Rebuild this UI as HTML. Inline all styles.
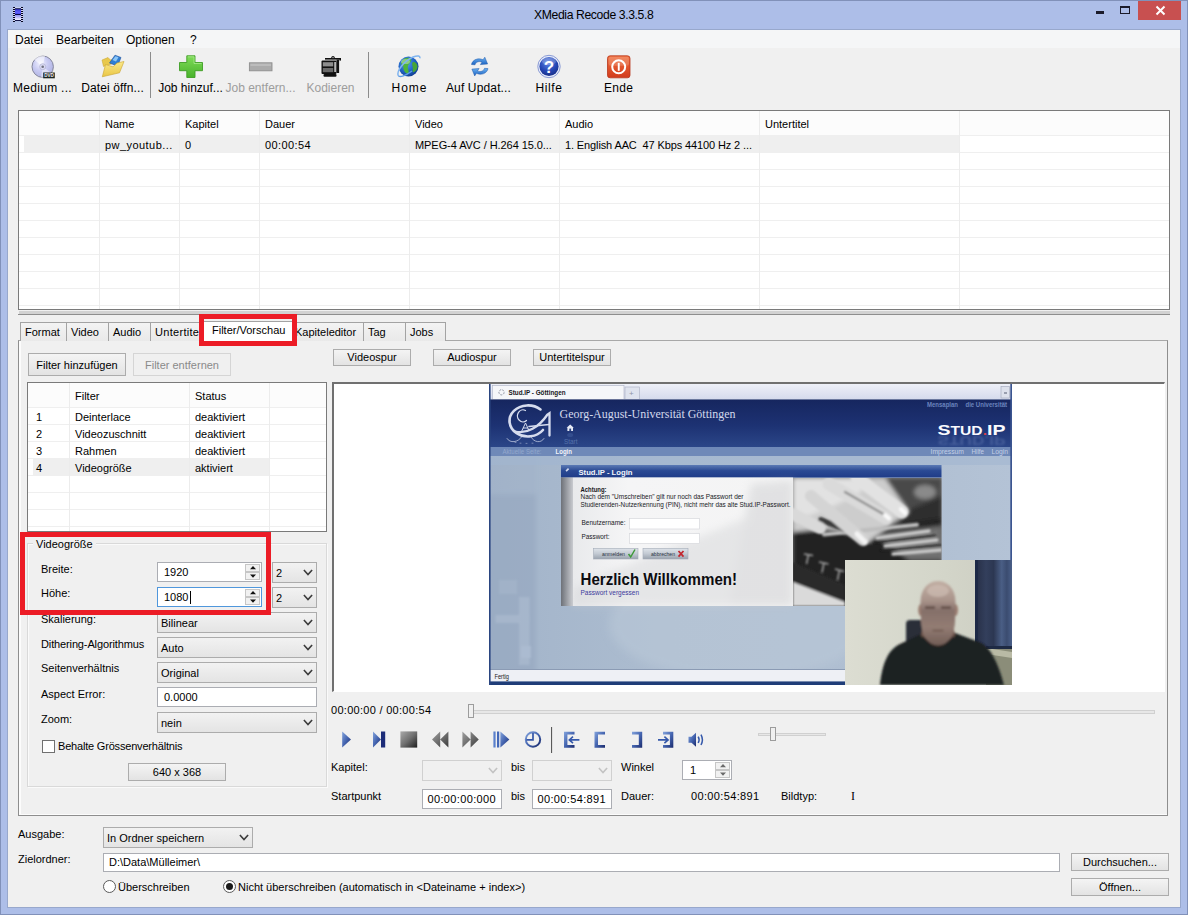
<!DOCTYPE html>
<html lang="de">
<head>
<meta charset="utf-8">
<title>XMedia Recode 3.3.5.8</title>
<style>
*{box-sizing:border-box;margin:0;padding:0}
html,body{width:1188px;height:915px;overflow:hidden}
body{background:#adbee8;font-family:"Liberation Sans",sans-serif;font-size:11px;color:#000;position:relative}
.a{position:absolute}
.t{position:absolute;white-space:pre;line-height:13px;height:13px;font-size:11px}
.tb{position:absolute;white-space:pre;font-size:12px;line-height:14px;height:14px;text-align:center}
.btn{position:absolute;border:1px solid #acacac;background:linear-gradient(#f4f4f4,#e3e3e3);text-align:center;font-size:11px;white-space:pre}
.btn.dis{color:#8a8a8a;border-color:#d5d5d5;background:#f0f0f0}
.edit{position:absolute;border:1px solid #abadb3;background:#fff;font-size:11px;white-space:pre}
.combo{position:absolute;border:1px solid #acacac;background:linear-gradient(#f2f2f2,#e4e4e4);font-size:11px;white-space:pre}
.combo.dis{border-color:#d0d0d0;background:#f0f0f0}
.vl{position:absolute;width:1px;background:#efefef}
.hl{position:absolute;height:1px;background:#efefef}
.tab{position:absolute;top:322px;height:19px;border:1px solid #a3a3a3;border-bottom:none;background:linear-gradient(#f3f3f3,#e9e9e9);font-size:11px;line-height:18px;white-space:pre;padding-left:4px;overflow:hidden}
</style>
</head>
<body>
<div class="a" style="left:0;top:0;width:1188px;height:915px;background:#adbee8;border:1px solid #8191b9"></div>
<div class="t" style="left:534px;top:9px;font-size:12.2px;letter-spacing:-0.38px">XMedia Recode 3.3.5.8</div>
<svg class="a" style="left:13px;top:7px" width="10" height="15" viewBox="0 0 10 15">
<defs><linearGradient id="fi1" x1="0" x2="0" y1="0" y2="1"><stop offset="0" stop-color="#3434c8"/><stop offset="0.6" stop-color="#6262ff"/><stop offset="1" stop-color="#4a4ae0"/></linearGradient><linearGradient id="fi2" x1="0" x2="0" y1="0" y2="1"><stop offset="0" stop-color="#8f8ff0"/><stop offset="1" stop-color="#f4f4ff"/></linearGradient></defs>
<rect x="0" y="0" width="2" height="15" fill="#cfd4f4"/><rect x="8" y="0" width="2" height="15" fill="#cfd4f4"/>
<rect x="2" y="0.4" width="6" height="1" fill="#d8dcf8"/>
<rect x="2" y="1.3" width="6" height="12.6" fill="#05053a"/>
<rect x="2" y="2.2" width="6" height="4.9" fill="url(#fi1)"/><rect x="2" y="8" width="6" height="5" fill="url(#fi2)"/>
<g fill="#05051e"><rect x="0" y="0" width="2" height="1"/><rect x="8" y="0" width="2" height="1"/><rect x="0" y="2" width="2" height="1"/><rect x="8" y="2" width="2" height="1"/><rect x="0" y="4" width="2" height="1"/><rect x="8" y="4" width="2" height="1"/><rect x="0" y="6" width="2" height="1"/><rect x="8" y="6" width="2" height="1"/><rect x="0" y="8" width="2" height="1"/><rect x="8" y="8" width="2" height="1"/><rect x="0" y="10" width="2" height="1"/><rect x="8" y="10" width="2" height="1"/><rect x="0" y="12" width="2" height="1"/><rect x="8" y="12" width="2" height="1"/><rect x="0" y="14" width="2" height="1"/><rect x="8" y="14" width="2" height="1"/></g>
</svg>
<div class="a" style="left:1138px;top:1px;width:43px;height:19px;background:#c85050"></div>
<div class="a" style="left:1096px;top:11px;width:8px;height:3px;background:#1b1b2a"></div>
<div class="a" style="left:1120px;top:6px;width:10px;height:8px;border:1px solid #1b1b2a;border-top-width:2px"></div>
<svg class="a" style="left:1155px;top:5px" width="11" height="11" viewBox="0 0 11 11"><path d="M1.5 1.5 L9.5 9.5 M9.5 1.5 L1.5 9.5" stroke="#fff" stroke-width="2"/></svg>
<div class="a" style="left:8px;top:30px;width:1172px;height:877px;background:#f0f0f0;box-shadow:0 0 0 1px #98a8cc"></div>
<div class="a" style="left:8px;top:30px;width:1172px;height:18px;background:#f5f6f7"></div>
<div class="t" style="left:15px;top:33px;font-size:12px;line-height:14px;height:14px">Datei</div>
<div class="t" style="left:56px;top:33px;font-size:12px;line-height:14px;height:14px">Bearbeiten</div>
<div class="t" style="left:126px;top:33px;font-size:12px;line-height:14px;height:14px">Optionen</div>
<div class="t" style="left:190px;top:33px;font-size:12px;line-height:14px;height:14px">?</div>
<div class="tb" style="left:-7.5px;width:100px;top:81px;letter-spacing:0.3px">Medium ...</div>
<div class="tb" style="left:62.5px;width:100px;top:81px;letter-spacing:0.12px">Datei öffn...</div>
<div class="tb" style="left:140.5px;width:100px;top:81px">Job hinzuf...</div>
<div class="tb" style="left:210.5px;width:100px;top:81px;color:#9d9d9d">Job entfern...</div>
<div class="tb" style="left:280.5px;width:100px;top:81px;color:#9d9d9d">Kodieren</div>
<div class="tb" style="left:359.5px;width:100px;top:81px;letter-spacing:1px">Home</div>
<div class="tb" style="left:428.5px;width:100px;top:81px;letter-spacing:0.15px">Auf Updat...</div>
<div class="tb" style="left:499px;width:100px;top:81px;letter-spacing:0.6px">Hilfe</div>
<div class="tb" style="left:568.5px;width:100px;top:81px;letter-spacing:0.3px">Ende</div>
<div class="a" style="left:150px;top:52px;width:1px;height:46px;background:#8c8c8c"></div>
<div class="a" style="left:368px;top:52px;width:1px;height:46px;background:#8c8c8c"></div>
<svg class="a" style="left:8px;top:48px" width="700" height="54" viewBox="8 48 700 54">
<defs>
<radialGradient id="gDisc" cx="0.4" cy="0.35" r="0.75"><stop offset="0" stop-color="#f2f2ff"/><stop offset="0.45" stop-color="#c9cbf2"/><stop offset="1" stop-color="#a9acdf"/></radialGradient>
<linearGradient id="gFold" x1="0" x2="0" y1="0" y2="1"><stop offset="0" stop-color="#fbe98a"/><stop offset="1" stop-color="#e9c544"/></linearGradient>
<linearGradient id="gPlus" x1="0" x2="0" y1="0" y2="1"><stop offset="0" stop-color="#7fdc58"/><stop offset="1" stop-color="#49b22c"/></linearGradient>
<radialGradient id="gGlobe" cx="0.4" cy="0.35" r="0.7"><stop offset="0" stop-color="#5aa0ee"/><stop offset="0.6" stop-color="#1f62c4"/><stop offset="1" stop-color="#103a8c"/></radialGradient>
<radialGradient id="gHelp" cx="0.45" cy="0.3" r="0.8"><stop offset="0" stop-color="#5f86e6"/><stop offset="0.55" stop-color="#2546b4"/><stop offset="1" stop-color="#16287a"/></radialGradient>
<linearGradient id="gEnd" x1="0" x2="0" y1="0" y2="1"><stop offset="0" stop-color="#f0703e"/><stop offset="1" stop-color="#d23a1c"/></linearGradient>
<linearGradient id="gUpd" x1="0" x2="0" y1="0" y2="1"><stop offset="0" stop-color="#6db3f2"/><stop offset="1" stop-color="#1c63c2"/></linearGradient>
</defs>
<!-- disc -->
<circle cx="42.7" cy="66.7" r="10.7" fill="url(#gDisc)" stroke="#85879c" stroke-width="1"/>
<path d="M42.7 66.7 L34 59.5 A11 11 0 0 1 45 56 Z" fill="#fff" opacity="0.55"/>
<path d="M42.7 66.7 L51.5 73 A11 11 0 0 1 41 77.3 Z" fill="#fff" opacity="0.45"/>
<circle cx="42.7" cy="66.7" r="3" fill="#dcdcf4" stroke="#a4a6c8" stroke-width="0.6"/>
<circle cx="42.7" cy="66.7" r="1.3" fill="#6f7080"/>
<rect x="43.2" y="72.5" width="11.6" height="5.8" fill="#1c2420"/>
<text x="44.2" y="77.3" font-family="'Liberation Sans',sans-serif" font-size="4.6" font-weight="bold" fill="#f2f2f2" textLength="9.6" lengthAdjust="spacingAndGlyphs">DVD</text>
<!-- folder -->
<path d="M102 60 L108 57.5 L110.5 60 L116 58.5 L117.5 62 L103.5 66.5 Z" fill="#e8c84c" stroke="#c9a22c" stroke-width="0.5"/>
<path d="M109.5 63 L115 55.2 L121 57.5 L117.5 66 Z" fill="#2f7fd4" stroke="#1c4f9c" stroke-width="0.6"/>
<path d="M112.5 60 L115.5 56.2 L118.5 57.3 L116 61.5Z" fill="#8cc6f6"/>
<path d="M102.3 76.8 L105.5 64.5 L113 66.8 L117 63 L124 61.5 L119.5 72.8 Z" fill="url(#gFold)" stroke="#c9a22c" stroke-width="0.6"/>
<!-- plus -->
<path d="M186.8 55.8 H195 V62.5 H202.5 V70.7 H195 V77.5 H186.8 V70.7 H179.5 V62.5 H186.8 Z" fill="url(#gPlus)" stroke="#3f9e26" stroke-width="0.9"/>
<path d="M187.8 56.8 H194 V63.5 H201.5" fill="none" stroke="#b5f09a" stroke-width="0.8" opacity="0.8"/>
<!-- minus -->
<rect x="249.4" y="62.8" width="22.6" height="8" fill="#ababab" stroke="#8f8f8f" stroke-width="0.9"/>
<rect x="250.4" y="63.8" width="20.6" height="2.2" fill="#bcbcbc"/>
<!-- kodieren -->
<g fill="#111">
<rect x="321.5" y="60.5" width="15" height="13.5" rx="1"/>
<rect x="323.5" y="74" width="13" height="2.8" rx="1"/>
<rect x="336.5" y="59.5" width="2.6" height="13.5"/>
<rect x="325" y="58" width="15.5" height="1.6"/>
<circle cx="333" cy="57.6" r="1.7"/>
<rect x="339.5" y="58" width="1.5" height="2.6"/>
</g>
<rect x="322.8" y="62.2" width="10.4" height="4.2" fill="#8e8e8e"/><rect x="322.8" y="68" width="10.4" height="4.2" fill="#6a6a6a"/>
<rect x="334.3" y="62" width="1.6" height="10" fill="#c9c9c9"/>
<circle cx="333" cy="57.6" r="0.7" fill="#ddd"/>
<!-- globe -->
<circle cx="408.5" cy="66.5" r="10" fill="url(#gGlobe)"/>
<path d="M402 61 C 404 57.5, 409 57, 411 59 C 412 62, 409 63, 408 66 C 407 69, 410 71, 408 74 C 405 73, 403 70, 403.5 67 C 401 65, 400.5 63, 402 61Z" fill="#4fb33c"/>
<path d="M413 62 C 415.5 61.5, 417.5 64, 417.5 67 C 417 70, 415 72, 413 72.5 C 412 70, 413.5 68, 412.5 66 C 412 64.5, 412 63, 413 62Z" fill="#46a536"/>
<ellipse cx="405.5" cy="61.5" rx="4.5" ry="2.6" fill="#fff" opacity="0.35"/>
<path d="M398.2 75.5 C 396.5 71, 404 61, 413 57 C 418 55, 420.5 56, 419.8 58.2" fill="none" stroke="#7fb4ef" stroke-width="1.5"/>
<path d="M398.2 75.5 C 399.5 78, 406 75.5, 412 71" fill="none" stroke="#5c9be6" stroke-width="1.5"/>
<!-- update arrows -->
<path d="M471.5 64.5 C 472.5 59.5, 478.5 57.5, 483 59.8 L484.8 57.2 L487.6 64 L480.4 64.6 L482 62.2 C 479.5 60.8, 475.8 61.8, 475 64.8 Z" fill="url(#gUpd)" stroke="#1c56a8" stroke-width="0.5"/>
<path d="M488 68.6 C 487 73.6, 481 75.6, 476.5 73.3 L474.7 75.9 L471.9 69.1 L479.1 68.5 L477.5 70.9 C 480 72.3, 483.7 71.3, 484.5 68.3 Z" fill="url(#gUpd)" stroke="#1c56a8" stroke-width="0.5"/>
<!-- help -->
<circle cx="549" cy="66.5" r="11.2" fill="#e9eefb" stroke="#7d8fcf" stroke-width="0.9"/>
<circle cx="549" cy="66.5" r="9.6" fill="url(#gHelp)"/>
<ellipse cx="549" cy="61.2" rx="7" ry="3.8" fill="#fff" opacity="0.22"/>
<text x="549" y="72.8" text-anchor="middle" font-family="'Liberation Sans',sans-serif" font-size="17" font-weight="bold" fill="#fff">?</text>
<!-- ende -->
<rect x="607.5" y="55.8" width="22.5" height="22" rx="2.6" fill="url(#gEnd)" stroke="#b8361c" stroke-width="0.8"/>
<rect x="608.6" y="56.8" width="20.3" height="9" rx="2" fill="#fff" opacity="0.18"/>
<circle cx="618.7" cy="66.8" r="6.5" fill="none" stroke="#fff" stroke-width="2"/>
<rect x="617.8" y="62.8" width="1.9" height="8" fill="#fff"/>
</svg>

<div class="a" style="left:18px;top:110px;width:1152px;height:200px;background:#fff;border:1px solid #7a7a7a"></div>
<div class="a" style="left:19px;top:111px;width:1150px;height:24px;background:#fcfcfc"></div>
<div class="a" style="left:24px;top:135px;width:935px;height:17px;background:#efefef"></div>
<div class="hl" style="left:19px;top:135px;width:1150px"></div>
<div class="hl" style="left:19px;top:152px;width:1150px"></div>
<div class="hl" style="left:19px;top:169px;width:1150px"></div>
<div class="hl" style="left:19px;top:186px;width:1150px"></div>
<div class="hl" style="left:19px;top:203px;width:1150px"></div>
<div class="hl" style="left:19px;top:220px;width:1150px"></div>
<div class="hl" style="left:19px;top:237px;width:1150px"></div>
<div class="hl" style="left:19px;top:254px;width:1150px"></div>
<div class="hl" style="left:19px;top:271px;width:1150px"></div>
<div class="hl" style="left:19px;top:288px;width:1150px"></div>
<div class="hl" style="left:19px;top:305px;width:1150px"></div>
<div class="vl" style="left:99px;top:111px;height:198px;background:#ececec"></div>
<div class="vl" style="left:179px;top:111px;height:198px;background:#ececec"></div>
<div class="vl" style="left:259px;top:111px;height:198px;background:#ececec"></div>
<div class="vl" style="left:409px;top:111px;height:198px;background:#ececec"></div>
<div class="vl" style="left:559px;top:111px;height:198px;background:#ececec"></div>
<div class="vl" style="left:759px;top:111px;height:198px;background:#ececec"></div>
<div class="vl" style="left:959px;top:111px;height:198px;background:#ececec"></div>
<div class="t" style="left:105px;top:118px">Name</div>
<div class="t" style="left:185px;top:118px">Kapitel</div>
<div class="t" style="left:265px;top:118px">Dauer</div>
<div class="t" style="left:415px;top:118px">Video</div>
<div class="t" style="left:565px;top:118px">Audio</div>
<div class="t" style="left:765px;top:118px">Untertitel</div>
<div class="t" style="left:105px;top:139px;letter-spacing:0.45px">pw_youtub...</div>
<div class="t" style="left:185px;top:139px;letter-spacing:0px">0</div>
<div class="t" style="left:265px;top:139px;letter-spacing:0.4px">00:00:54</div>
<div class="t" style="left:415px;top:139px;letter-spacing:-0.07px">MPEG-4 AVC / H.264 15.0...</div>
<div class="t" style="left:565px;top:139px;letter-spacing:-0.12px">1. English AAC  47 Kbps 44100 Hz 2 ...</div>
<div class="a" style="left:19px;top:311px;width:1151px;height:3px;background:#d2d2d2"></div><div class="a" style="left:18px;top:314px;width:1152px;height:1px;background:#8e8e8e"></div>
<div class="a" style="left:18px;top:340px;width:1150px;height:476px;background:#f0f0f0;border:1px solid #8e8e8e;border-top-color:#a8a8a8;box-shadow:inset 2px 0 0 #fcfcfc, inset 0 -1px 0 #fcfcfc"></div>
<div class="tab" style="left:20px;width:47px">Format</div>
<div class="tab" style="left:66px;width:43px">Video</div>
<div class="tab" style="left:108px;width:43px">Audio</div>
<div class="tab" style="left:150px;width:57px;letter-spacing:0.3px">Untertitel</div>
<div class="tab" style="left:293px;width:71px;padding-left:1px">Kapiteleditor</div>
<div class="tab" style="left:363px;width:43px">Tag</div>
<div class="tab" style="left:405px;width:41px">Jobs</div>
<div class="tab" style="left:203px;top:321px;width:92px;height:20px;background:#fff;line-height:16px;padding-left:8px">Filter/Vorschau</div>
<div class="a" style="left:199px;top:314px;width:98px;height:32px;border:5px solid #ec1c26"></div>
<div class="btn" style="left:28px;top:353px;width:98px;height:23px;line-height:22.5px">Filter hinzufügen</div>
<div class="btn dis" style="left:133px;top:353px;width:98px;height:23px;line-height:22.5px">Filter entfernen</div>
<div class="a" style="left:27px;top:382px;width:300px;height:150px;background:#fff;border:1px solid #7a7a7a"></div>
<div class="a" style="left:28px;top:383px;width:298px;height:24px;background:#fcfcfc"></div>
<div class="a" style="left:33px;top:459px;width:236px;height:16px;background:#efefef"></div>
<div class="hl" style="left:28px;top:407px;width:298px"></div>
<div class="hl" style="left:28px;top:424px;width:298px"></div>
<div class="hl" style="left:28px;top:441px;width:298px"></div>
<div class="hl" style="left:28px;top:458px;width:298px"></div>
<div class="hl" style="left:28px;top:475px;width:298px"></div>
<div class="hl" style="left:28px;top:492px;width:298px"></div>
<div class="hl" style="left:28px;top:509px;width:298px"></div>
<div class="hl" style="left:28px;top:526px;width:298px"></div>
<div class="vl" style="left:69px;top:383px;height:148px;background:#ececec"></div>
<div class="vl" style="left:189px;top:383px;height:148px;background:#ececec"></div>
<div class="vl" style="left:269px;top:383px;height:148px;background:#ececec"></div>
<div class="t" style="left:75px;top:390px">Filter</div><div class="t" style="left:195px;top:390px">Status</div>
<div class="t" style="left:36px;top:411px">1</div><div class="t" style="left:75px;top:411px">Deinterlace</div><div class="t" style="left:195px;top:411px">deaktiviert</div>
<div class="t" style="left:36px;top:428px">2</div><div class="t" style="left:75px;top:428px">Videozuschnitt</div><div class="t" style="left:195px;top:428px">deaktiviert</div>
<div class="t" style="left:36px;top:445px">3</div><div class="t" style="left:75px;top:445px">Rahmen</div><div class="t" style="left:195px;top:445px">deaktiviert</div>
<div class="t" style="left:36px;top:462px">4</div><div class="t" style="left:75px;top:462px">Videogröße</div><div class="t" style="left:195px;top:462px">aktiviert</div>
<div class="a" style="left:27px;top:543px;width:300px;height:244px;border:1px solid #d9d9d9;box-shadow:inset 1px 1px 0 #fafafa,1px 1px 0 #fafafa"></div>
<div class="t" style="left:33px;top:538px;background:#f0f0f0;padding:0 3px">Videogröße</div>
<div class="t" style="left:41px;top:563px">Breite:</div>
<div class="t" style="left:41px;top:587px">Höhe:</div>
<div class="t" style="left:41px;top:613px">Skalierung:</div>
<div class="t" style="left:41px;top:638px;letter-spacing:-0.13px">Dithering-Algorithmus</div>
<div class="t" style="left:41px;top:662px">Seitenverhältnis</div>
<div class="t" style="left:41px;top:688px">Aspect Error:</div>
<div class="t" style="left:41px;top:713px">Zoom:</div>
<div class="edit" style="left:157px;top:562px;width:105px;height:20px;line-height:18px;padding-left:6px">1920<div class="a" style="right:1px;top:1px;width:15px;height:16px"><div class="a" style="left:0;top:0;width:15px;height:8px;border:1px solid #c6c6c6;background:#f1f1f1"></div><div class="a" style="left:0;top:8px;width:15px;height:8px;border:1px solid #c6c6c6;background:#f1f1f1"></div><svg class="a" style="left:4.5px;top:2px" width="6" height="12" viewBox="0 0 6 12"><path d="M0 3.3 L3 0 L6 3.3Z M0 8.5 L3 11.8 L6 8.5Z" fill="#111"/></svg></div></div>
<div class="edit" style="left:157px;top:587px;width:105px;height:20px;line-height:18px;padding-left:6px;border-color:#4f97dc">1080<span class="a" style="left:32px;top:3px;width:1px;height:13px;background:#000"></span><div class="a" style="right:1px;top:1px;width:15px;height:16px"><div class="a" style="left:0;top:0;width:15px;height:8px;border:1px solid #c6c6c6;background:#f1f1f1"></div><div class="a" style="left:0;top:8px;width:15px;height:8px;border:1px solid #c6c6c6;background:#f1f1f1"></div><svg class="a" style="left:4.5px;top:2px" width="6" height="12" viewBox="0 0 6 12"><path d="M0 3.3 L3 0 L6 3.3Z M0 8.5 L3 11.8 L6 8.5Z" fill="#111"/></svg></div></div>
<div class="combo" style="left:272px;top:562px;width:45px;height:21px;line-height:20px;padding-left:3px">2<svg class="a" style="right:3px;top:6px" width="10" height="8" viewBox="0 0 10 8"><path d="M0.9 1 L5 5.6 L9.1 1" fill="none" stroke="#3c3c3c" stroke-width="1.6"/></svg></div>
<div class="combo" style="left:272px;top:587px;width:45px;height:21px;line-height:20px;padding-left:3px">2<svg class="a" style="right:3px;top:6px" width="10" height="8" viewBox="0 0 10 8"><path d="M0.9 1 L5 5.6 L9.1 1" fill="none" stroke="#3c3c3c" stroke-width="1.6"/></svg></div>
<div class="combo" style="left:157px;top:612px;width:160px;height:21px;line-height:20px;padding-left:3px">Bilinear<svg class="a" style="right:3px;top:6px" width="10" height="8" viewBox="0 0 10 8"><path d="M0.9 1 L5 5.6 L9.1 1" fill="none" stroke="#3c3c3c" stroke-width="1.6"/></svg></div>
<div class="combo" style="left:157px;top:637px;width:160px;height:21px;line-height:20px;padding-left:3px">Auto<svg class="a" style="right:3px;top:6px" width="10" height="8" viewBox="0 0 10 8"><path d="M0.9 1 L5 5.6 L9.1 1" fill="none" stroke="#3c3c3c" stroke-width="1.6"/></svg></div>
<div class="combo" style="left:157px;top:662px;width:160px;height:21px;line-height:20px;padding-left:3px">Original<svg class="a" style="right:3px;top:6px" width="10" height="8" viewBox="0 0 10 8"><path d="M0.9 1 L5 5.6 L9.1 1" fill="none" stroke="#3c3c3c" stroke-width="1.6"/></svg></div>
<div class="edit" style="left:157px;top:687px;width:160px;height:20px;line-height:18px;padding-left:6px">0.0000</div>
<div class="combo" style="left:157px;top:712px;width:160px;height:21px;line-height:20px;padding-left:3px">nein<svg class="a" style="right:3px;top:6px" width="10" height="8" viewBox="0 0 10 8"><path d="M0.9 1 L5 5.6 L9.1 1" fill="none" stroke="#3c3c3c" stroke-width="1.6"/></svg></div>
<div class="a" style="left:42px;top:740px;width:13px;height:13px;background:#fff;border:1px solid #707070"></div>
<div class="t" style="left:58px;top:740px;letter-spacing:-0.19px">Behalte Grössenverhältnis</div>
<div class="btn" style="left:128px;top:763px;width:98px;height:18px;line-height:16px">640 x 368</div>
<div class="a" style="left:20px;top:532px;width:251px;height:83px;border:5px solid #ec1c26"></div>
<div class="btn" style="left:333px;top:349px;width:78px;height:17px;line-height:15px">Videospur</div>
<div class="btn" style="left:433px;top:349px;width:78px;height:17px;line-height:15px">Audiospur</div>
<div class="btn" style="left:533px;top:349px;width:78px;height:17px;line-height:15px">Untertitelspur</div>
<div class="a" style="left:332px;top:382px;width:833px;height:310px;background:#fff;border:1px solid #fff;border-top:2px solid #707070;border-left:2px solid #707070"></div>
<svg class="a" style="left:489px;top:384px" width="523" height="301" viewBox="0 0 523 301" font-family="'Liberation Sans',sans-serif">
<defs>
<linearGradient id="gBody" x1="0" x2="1" y1="0" y2="0"><stop offset="0" stop-color="#a2b3c9"/><stop offset="0.12" stop-color="#a6b7cc"/><stop offset="0.35" stop-color="#adbdd0"/><stop offset="0.8" stop-color="#b0bfd2"/><stop offset="1" stop-color="#b4c3d6"/></linearGradient>
<linearGradient id="gHead" x1="0" x2="0" y1="0" y2="1"><stop offset="0" stop-color="#16265f"/><stop offset="0.55" stop-color="#1d3273"/><stop offset="1" stop-color="#2b4688"/></linearGradient>
<linearGradient id="gTabs" x1="0" x2="0" y1="0" y2="1"><stop offset="0" stop-color="#eef0f8"/><stop offset="1" stop-color="#d5daec"/></linearGradient>
<linearGradient id="gDlgT" x1="0" x2="0" y1="0" y2="1"><stop offset="0" stop-color="#5b7ab5"/><stop offset="0.45" stop-color="#2b4a94"/><stop offset="1" stop-color="#1f3c88"/></linearGradient>
<linearGradient id="gBtn" x1="0" x2="0" y1="0" y2="1"><stop offset="0" stop-color="#dfe4ea"/><stop offset="0.5" stop-color="#c3cad3"/><stop offset="1" stop-color="#9aa3ae"/></linearGradient>
<linearGradient id="gStrip" x1="0" x2="1" y1="0" y2="0"><stop offset="0" stop-color="#6d7178"/><stop offset="1" stop-color="#c9cbd0"/></linearGradient>
<linearGradient id="gPanel" x1="0" x2="1" y1="0" y2="0"><stop offset="0" stop-color="#e9eaec"/><stop offset="0.25" stop-color="#f5f5f6"/><stop offset="1" stop-color="#f4f4f4"/></linearGradient>
<linearGradient id="gWall" x1="0" x2="1" y1="0" y2="0"><stop offset="0" stop-color="#dcddd2"/><stop offset="0.6" stop-color="#d3d5c9"/><stop offset="1" stop-color="#cccdc1"/></linearGradient>
<linearGradient id="gCurt" x1="0" x2="1" y1="0" y2="0"><stop offset="0" stop-color="#262e45"/><stop offset="0.3" stop-color="#333f5c"/><stop offset="0.5" stop-color="#2c3752"/><stop offset="0.72" stop-color="#4a5e85"/><stop offset="0.86" stop-color="#3b4c70"/><stop offset="1" stop-color="#4a5f88"/></linearGradient>
<linearGradient id="gFace" x1="0" x2="0" y1="0" y2="1"><stop offset="0" stop-color="#c2afa4"/><stop offset="0.3" stop-color="#a8938a"/><stop offset="0.45" stop-color="#85706a"/><stop offset="0.7" stop-color="#937c73"/><stop offset="1" stop-color="#6e5a54"/></linearGradient>
<filter id="b05" x="-10%" y="-10%" width="120%" height="120%"><feGaussianBlur stdDeviation="0.45"/></filter>
<filter id="b1" x="-10%" y="-10%" width="120%" height="120%"><feGaussianBlur stdDeviation="0.8"/></filter>
<filter id="b15" x="-10%" y="-10%" width="120%" height="120%"><feGaussianBlur stdDeviation="1.3"/></filter>
<filter id="b2" x="-10%" y="-10%" width="120%" height="120%"><feGaussianBlur stdDeviation="2"/></filter>
<filter id="b3" x="-20%" y="-20%" width="140%" height="140%"><feGaussianBlur stdDeviation="4"/></filter>
<clipPath id="cPhoto"><rect x="304" y="94" width="148.5" height="128"/></clipPath>
<clipPath id="cCam"><rect x="356" y="176" width="167" height="125"/></clipPath>
</defs>
<rect width="523" height="301" fill="url(#gBody)"/>
<!-- sidebar watermark -->
<g filter="url(#b2)"><rect x="0" y="110" width="47" height="180" fill="#93a6be" opacity="0.55"/><rect x="0" y="72" width="47" height="40" fill="#9fb1c8" opacity="0.4"/></g>
<g filter="url(#b1)" opacity="0.5"><rect x="30" y="213" width="10.5" height="68" fill="#b2c1d4"/><rect x="6.5" y="231" width="34" height="8" fill="#b2c1d4"/><rect x="10" y="196" width="18" height="14" fill="#a9b9ce"/><rect x="32" y="262" width="10" height="12" fill="#bccade"/></g>
<ellipse cx="250" cy="240" rx="130" ry="55" fill="#bccad9" opacity="0.5" filter="url(#b3)"/>
<!-- browser tab strip -->
<rect x="0" y="0" width="523" height="15.5" fill="url(#gTabs)"/>
<rect x="3.5" y="1.5" width="131.5" height="14" fill="#f5f6f9" stroke="#aab0c4" stroke-width="0.6"/>
<rect x="136" y="3" width="14.5" height="12.5" fill="#dfe3ee" stroke="#aab0c4" stroke-width="0.6"/>
<text x="140" y="12.3" font-size="8" fill="#8f95a6">+</text>
<circle cx="12.5" cy="8.3" r="2.6" fill="none" stroke="#6a6f80" stroke-width="0.7" stroke-dasharray="2 1.2"/>
<text x="19.5" y="10.8" font-size="6.9" font-weight="bold" fill="#15171c" textLength="57" lengthAdjust="spacingAndGlyphs">Stud.IP - Göttingen</text>
<rect x="512" y="2.5" width="8.5" height="11.5" fill="#dde1ec" stroke="#9fa6ba" stroke-width="0.6"/>
<rect x="515" y="8.5" width="3" height="1" fill="#555c70"/>
<!-- header -->
<rect x="0" y="15.5" width="523" height="47.5" fill="url(#gHead)"/>
<!-- logo -->
<g fill="none" stroke="#d6dcee" stroke-linecap="round" filter="url(#b05)">
<path d="M51.5 25.5 A18.5 15.5 0 1 0 54 46" stroke-width="2.6"/>
<path d="M26 47.5 C 38 50.5, 50 43, 58.5 30.5 L60.5 29.2 L60.5 51.5" stroke-width="2.3"/>
<path d="M40 42.5 L60 40.5" stroke-width="1.6"/>
<path d="M36.5 26.5 A5.5 6 0 1 0 37.5 36.5" stroke-width="1.2"/>
<path d="M33 46.5 L36.5 39 L40 46.5 M34.3 44 L38.7 44" stroke-width="1"/>
<path d="M18 54.5 C 21 59.5, 29 58.5, 32.5 53 M42 53 C 45 58.5, 52 59.5, 55 54.5" stroke-width="0.9" opacity="0.75"/>
<path d="M26 58.5 L27 58.5 M31 59.2 L32 59.2 M37 59.4 L38 59.4 M43 59.2 L44 59.2" stroke-width="0.8" opacity="0.55"/>
</g>
<text x="70.5" y="34.2" font-family="'Liberation Serif',serif" font-size="12.2" fill="#d3d9ec" textLength="176" lengthAdjust="spacingAndGlyphs">Georg-August-Universität Göttingen</text>
<path d="M77.6 43.8 L81.2 40.4 L84.8 43.8 L84 43.8 L84 47 L78.4 47 L78.4 43.8 Z" fill="#e6eaf5"/><rect x="80.3" y="44.6" width="1.8" height="2.4" fill="#2a427f"/>
<ellipse cx="81.2" cy="51" rx="3" ry="2" fill="#3b5596" opacity="0.7"/>
<text x="75" y="60.3" font-size="6.3" fill="#5672ab" textLength="13.5" lengthAdjust="spacingAndGlyphs">Start</text>
<text x="438" y="23" font-size="6.3" fill="#6a83bd" font-weight="bold" textLength="31" lengthAdjust="spacingAndGlyphs">Mensaplan</text><text x="476.5" y="23" font-size="6.3" fill="#6a83bd" font-weight="bold" textLength="41.5" lengthAdjust="spacingAndGlyphs">die Universität</text>
<!-- Stud.IP logo -->
<g filter="url(#b1)" opacity="0.28"><text x="448.5" y="51.5" font-size="12" font-weight="bold" fill="#8ea2d0" textLength="68" lengthAdjust="spacingAndGlyphs" transform="translate(0,103) scale(1,-1)">STUD.IP</text></g>
<text x="448.5" y="51.3" font-weight="bold" fill="#fafbfe" textLength="68" lengthAdjust="spacingAndGlyphs"><tspan font-size="15.5">S</tspan><tspan font-size="12.4">TUD</tspan><tspan font-size="12.4" fill="#d8404a">.</tspan><tspan font-size="15.5">IP</tspan></text>
<!-- nav bar -->
<rect x="0" y="63" width="523" height="9" fill="#6f89b8"/>
<rect x="0" y="72" width="523" height="9" fill="#a1b5d0" opacity="0.6"/>
<text x="13.5" y="69.8" font-size="6.6" fill="#93a8cd" textLength="39" lengthAdjust="spacingAndGlyphs">Aktuelle Seite:</text>
<text x="66.5" y="69.8" font-size="6.6" font-weight="bold" fill="#f3f5fa" textLength="16.5" lengthAdjust="spacingAndGlyphs">Login</text>
<text x="441.5" y="69.8" font-size="6.6" fill="#c3cfe6" textLength="33.5" lengthAdjust="spacingAndGlyphs">Impressum</text><text x="482.5" y="69.8" font-size="6.6" fill="#c3cfe6" textLength="12.5" lengthAdjust="spacingAndGlyphs">Hilfe</text><text x="502.5" y="69.8" font-size="6.6" fill="#c3cfe6" textLength="16.5" lengthAdjust="spacingAndGlyphs">Login</text>
<!-- dialog -->
<rect x="72" y="81" width="380.5" height="12.5" fill="url(#gDlgT)"/>
<path d="M76.5 86.5 l2.5 -2.5 l1.2 1.2 l-2.5 2.5z" fill="#d5dcef"/>
<text x="89.5" y="90.6" font-size="7.6" font-weight="bold" fill="#f4f6fb" textLength="54" lengthAdjust="spacingAndGlyphs">Stud.IP - Login</text>
<rect x="72" y="93.5" width="12" height="128.5" fill="url(#gStrip)"/>
<rect x="84" y="93.5" width="220" height="128.5" fill="url(#gPanel)"/>
<g filter="url(#b3)" opacity="0.4"><path d="M84 205 C 140 175, 230 150, 304 112 L304 222 L84 222Z" fill="#cfd0d3"/><path d="M262 100 L304 96 L304 222 L240 222Z" fill="#c6c7ca"/></g>
<!-- photo -->
<g clip-path="url(#cPhoto)">
<rect x="304" y="94" width="149" height="128" fill="#858585"/>
<g filter="url(#b2)">
<path d="M396 94 L453 94 L453 160 L400 150 Z" fill="#4a4a4a"/>
<path d="M414 128 L453 112 L453 160 L406 150 Z" fill="#2e2e2e"/>
<ellipse cx="436" cy="108" rx="11" ry="7" fill="#8a8a8a"/>
<!-- keyboard -->
<path d="M304 141 L360 148 L453 134 L453 222 L304 222Z" fill="#222"/>
<path d="M384 150 L452 142 L453 176 L420 176 Z" fill="#6f6f6f"/>
<!-- hand back -->
<path d="M304 94 L396 94 L420 128 L402 140 L380 158 L352 146 L332 145 L304 148 Z" fill="#cdcdcd"/>
<path d="M304 94 L380 94 L370 110 L340 124 L304 138 Z" fill="#e2e2e2"/>
</g>
<g filter="url(#b15)" stroke-linecap="round" fill="none">
<path d="M388 154 L440 147 M396 162 L448 156 M404 170 L452 166" stroke="#c9c9c9" stroke-width="3.4"/>
<path d="M385 158.5 L446 151.5 M392 166.5 L452 161" stroke="#242424" stroke-width="1.5"/>
<path d="M335 150.5 L428 140.7" stroke="#bdbdbd" stroke-width="4"/>
<path d="M332 136 L358 146" stroke="#3a3a3a" stroke-width="6"/>
<path d="M304 130 L331 144" stroke="#d9d9d9" stroke-width="12"/>
<path d="M322 112 L374 156" stroke="#d4d4d4" stroke-width="12"/>
<path d="M368 150 L376 158" stroke="#f4f4f4" stroke-width="5"/>
<path d="M340 100 L397 134" stroke="#dadada" stroke-width="13"/>
<path d="M356 108 L396 131" stroke="#8a8a8a" stroke-width="2.2"/>
<path d="M368 94 L413 128" stroke="#e2e2e2" stroke-width="13"/>
<path d="M396 131 L400 134.5" stroke="#fafafa" stroke-width="4"/><path d="M412 125 L416 129" stroke="#fafafa" stroke-width="4"/>
</g>
<g filter="url(#b1)">
<path d="M304 178 L356 201 L356 217.5 L304 197.5Z" fill="#2b2b2b"/>
<path d="M304 198 L356 218 L356 222 L304 222 Z" fill="#dadada"/>
<g stroke="#a4a4a4" stroke-width="1.5" fill="none"><path d="M319.5 170.5 L317.5 180 M315 170 L324 171.5"/><path d="M335 178.5 L333 188.5 M330 178 L339.5 180"/><path d="M350.5 186 L348.5 196 M346 185 L355 187.5"/></g>
</g>
</g>
<!-- dialog text -->
<g font-size="6.5" fill="#17181c">
<text x="91.5" y="107.5" font-weight="bold" textLength="26" lengthAdjust="spacingAndGlyphs">Achtung:</text>
<text x="91.5" y="115.2" textLength="163" lengthAdjust="spacingAndGlyphs">Nach dem "Umschreiben" gilt nur noch das Passwort der</text>
<text x="91.5" y="122.8" textLength="210" lengthAdjust="spacingAndGlyphs">Studierenden-Nutzerkennung (PIN), nicht mehr das alte Stud.IP-Passwort.</text>
<text x="92.5" y="141" textLength="44" lengthAdjust="spacingAndGlyphs">Benutzername:</text>
<text x="92.5" y="155.3" textLength="28" lengthAdjust="spacingAndGlyphs">Passwort:</text>
</g>
<rect x="140.5" y="134.5" width="70" height="10.5" fill="#fff" stroke="#d6d8dc" stroke-width="0.7"/>
<rect x="140.5" y="149.5" width="70" height="10" fill="#fff" stroke="#d6d8dc" stroke-width="0.7"/>
<rect x="104.5" y="164.3" width="44.5" height="10.7" fill="url(#gBtn)" stroke="#a3acb8" stroke-width="0.6"/>
<rect x="154" y="164.3" width="45" height="10.7" fill="url(#gBtn)" stroke="#a3acb8" stroke-width="0.6"/>
<text x="113" y="171.8" font-size="5.4" fill="#2a3442" textLength="23" lengthAdjust="spacingAndGlyphs">anmelden</text>
<text x="162" y="171.8" font-size="5.4" fill="#2a3442" textLength="24" lengthAdjust="spacingAndGlyphs">abbrechen</text>
<path d="M139.5 170 l2.2 3 l4.3 -7.5" fill="none" stroke="#3f9a3a" stroke-width="1.5"/>
<path d="M189.5 167 l5 5.6 M194.5 167 l-5 5.6" stroke="#c2262e" stroke-width="1.7"/>
<text x="91.5" y="201" font-size="16.6" font-weight="bold" fill="#0c0c10" textLength="156.5" lengthAdjust="spacingAndGlyphs">Herzlich Willkommen!</text>
<text x="91.5" y="210.8" font-size="6.5" fill="#3c3a9c" textLength="58.5" lengthAdjust="spacingAndGlyphs">Passwort vergessen</text>
<!-- status bar -->
<rect x="0" y="285" width="523" height="1" fill="#8b9bb4"/>
<rect x="0" y="286" width="523" height="11.5" fill="#eef0f5"/>
<text x="5.5" y="294.7" font-size="6.4" fill="#222" textLength="14.5" lengthAdjust="spacingAndGlyphs">Fertig</text>
<rect x="0" y="297.5" width="523" height="3.5" fill="#1f3d78"/>
<rect x="0" y="0" width="1.6" height="301" fill="#2a4580"/>
<rect x="521.3" y="0" width="1.7" height="176" fill="#3b5590"/>
<!-- webcam -->
<g clip-path="url(#cCam)">
<rect x="356" y="176" width="167" height="125" fill="url(#gWall)"/>
<rect x="486" y="176" width="37" height="91" fill="url(#gCurt)"/>
<rect x="486" y="176" width="3" height="91" fill="#1d2946"/>
<rect x="497" y="264" width="26" height="37" fill="#8b8d79"/>
<path d="M497 264 L523 268 L523 274 L497 270Z" fill="#b9baa5"/>
<rect x="497" y="262" width="26" height="3" fill="#1e2a44"/>
<g filter="url(#b1)">
<rect x="417" y="236" width="22" height="26" rx="4" fill="#2a2e37"/>
<path d="M391 301 C 393 282, 398 266, 411 260 L432 250 L436 244 L462 244 L466 249 L490 258 C 502 262, 510 282, 515 301 Z" fill="#1c2023"/>
<path d="M434 240 L464 240 L466 252 C 458 260, 440 260, 432 252 Z" fill="#7a5f54"/>
<ellipse cx="431.8" cy="226" rx="2.6" ry="6" fill="#9c7e71"/><ellipse cx="466.4" cy="226" rx="2.6" ry="6" fill="#9c7e71"/>
<path d="M431.5 218 C 431.5 190, 466.5 190, 466.5 218 L466 238 C 465 254, 456 263, 449 263 C 442 263, 433 254, 432 238 Z" fill="url(#gFace)"/>
<ellipse cx="449" cy="207" rx="11" ry="6" fill="#d2c2b8" opacity="0.6"/>
<path d="M436 223.5 L446 223.5 M452 223.5 L462 223.5" stroke="#4a3832" stroke-width="3" fill="none" opacity="0.55"/>
<path d="M443.5 246.5 L454.5 246.5" stroke="#5c443c" stroke-width="1.6" fill="none" opacity="0.6"/>
<path d="M436 254 C 444 264, 454 264, 462 254 L466 250 C 456 268, 442 268, 432 250Z" fill="#2c2523"/>
</g>
</g>
</svg>

<div class="t" style="left:331px;top:704px;letter-spacing:0.29px">00:00:00 / 00:00:54</div>
<div class="a" style="left:469px;top:710px;width:686px;height:4px;background:#e7e7e7;border:1px solid #d0d0d0"></div>
<div class="a" style="left:468px;top:704px;width:6px;height:14px;background:#f0f0f0;border:1px solid #9c9c9c"></div>
<svg class="a" style="left:336px;top:724px" width="380" height="32" viewBox="336 724 380 32">
<defs>
<linearGradient id="pB" x1="0" x2="1" y1="0" y2="1"><stop offset="0" stop-color="#84a4dc"/><stop offset="0.5" stop-color="#4565b0"/><stop offset="1" stop-color="#1a2a6c"/></linearGradient>
<linearGradient id="pG" x1="0" x2="1" y1="0" y2="1"><stop offset="0" stop-color="#a9a9a9"/><stop offset="0.5" stop-color="#707070"/><stop offset="1" stop-color="#1e1e1e"/></linearGradient>
<linearGradient id="pG2" x1="0" x2="1" y1="0" y2="1"><stop offset="0" stop-color="#a0a0a0"/><stop offset="1" stop-color="#3c3c3c"/></linearGradient>
</defs>
<path d="M342.2 731.5 L351 739.5 L342.2 747.5 Z" fill="url(#pB)"/>
<path d="M373 731.5 L381 739.5 L373 747.5 Z" fill="url(#pB)"/><rect x="381" y="731.5" width="4.2" height="16" fill="#1c2c78"/>
<rect x="400.4" y="731.4" width="16.8" height="16.2" fill="url(#pG)"/>
<path d="M440.2 731.5 L440.2 747.5 L432 739.5 Z M448.4 731.5 L448.4 747.5 L440.2 739.5 Z" fill="url(#pG2)"/>
<path d="M462.4 731.5 L470.6 739.5 L462.4 747.5 Z M470.6 731.5 L478.8 739.5 L470.6 747.5 Z" fill="url(#pG2)"/>
<rect x="493.4" y="731.5" width="2.2" height="16" fill="#5a80cc"/><rect x="497" y="731.5" width="2.2" height="16" fill="#4468b8"/>
<path d="M500.4 731.5 L509.4 739.5 L500.4 747.5 Z" fill="url(#pB)"/>
<circle cx="533" cy="739.5" r="7.2" fill="none" stroke="url(#pB)" stroke-width="2"/>
<path d="M533 733 V739.8 H526.4" fill="none" stroke="#3456a8" stroke-width="1.7"/>
<rect x="551" y="727" width="1.1" height="26" fill="#5a5a5a"/>
<path d="M564 731.8 H574.5 V734.6 H567.4 V745 H574.5 V747.8 H564 Z" fill="url(#pB)"/>
<path d="M579.4 739.9 H569.5 M573 736.6 L569.3 739.9 L573 743.2" fill="none" stroke="#3558aa" stroke-width="1.6"/>
<path d="M594.5 731.8 H605 V734.6 H598 V745 H605 V747.8 H594.5 Z" fill="url(#pB)"/>
<path d="M642.2 731.8 H632 V734.6 H638.8 V745 H632 V747.8 H642.2 Z" fill="url(#pB)"/>
<path d="M673.3 731.8 H663 V734.6 H669.9 V745 H663 V747.8 H673.3 Z" fill="url(#pB)"/>
<path d="M658 739.9 H668 M664.4 736.6 L668.1 739.9 L664.4 743.2" fill="none" stroke="#3558aa" stroke-width="1.6"/>
<path d="M688.5 736.8 H691.5 L696 732.8 V746.8 L691.5 742.8 H688.5 Z" fill="url(#pB)"/>
<path d="M698.2 736.6 Q700 739.8 698.2 743 M701 734.6 Q703.8 739.8 701 745" fill="none" stroke="#3558aa" stroke-width="1.5"/>
</svg>

<div class="a" style="left:758px;top:733px;width:68px;height:3px;background:#e7e7e7;border:1px solid #d0d0d0"></div>
<div class="a" style="left:770px;top:727px;width:6px;height:14px;background:#f0f0f0;border:1px solid #9c9c9c"></div>
<div class="t" style="left:331px;top:761px">Kapitel:</div>
<div class="combo dis" style="left:422px;top:760px;width:80px;height:21px;line-height:20px;padding-left:3px"><svg class="a" style="right:3px;top:6px" width="10" height="8" viewBox="0 0 10 8"><path d="M0.9 1 L5 5.6 L9.1 1" fill="none" stroke="#c3c3c3" stroke-width="1.6"/></svg></div>
<div class="combo dis" style="left:532px;top:760px;width:80px;height:21px;line-height:20px;padding-left:3px"><svg class="a" style="right:3px;top:6px" width="10" height="8" viewBox="0 0 10 8"><path d="M0.9 1 L5 5.6 L9.1 1" fill="none" stroke="#c3c3c3" stroke-width="1.6"/></svg></div>
<div class="t" style="left:511px;top:761px">bis</div><div class="t" style="left:621px;top:761px">Winkel</div>
<div class="edit" style="left:682px;top:760px;width:50px;height:20px;line-height:18px;padding-left:7px">1<div class="a" style="right:1px;top:1px;width:15px;height:16px"><div class="a" style="left:0;top:0;width:15px;height:8px;border:1px solid #c6c6c6;background:#f1f1f1"></div><div class="a" style="left:0;top:8px;width:15px;height:8px;border:1px solid #c6c6c6;background:#f1f1f1"></div><svg class="a" style="left:4.5px;top:2px" width="6" height="12" viewBox="0 0 6 12"><path d="M0 3.3 L3 0 L6 3.3Z M0 8.5 L3 11.8 L6 8.5Z" fill="#6a6a6a"/></svg></div></div>
<div class="t" style="left:331px;top:790px">Startpunkt</div>
<div class="edit" style="left:422px;top:789px;width:80px;height:20px;line-height:18.5px;padding-left:4.5px;letter-spacing:0.36px">00:00:00:000</div>
<div class="t" style="left:511px;top:790px">bis</div>
<div class="edit" style="left:532px;top:789px;width:80px;height:20px;line-height:18.5px;padding-left:4.5px;letter-spacing:0.36px">00:00:54:891</div>
<div class="t" style="left:621px;top:790px">Dauer:</div><div class="t" style="left:691px;top:790px;letter-spacing:0.36px">00:00:54:891</div><div class="t" style="left:781px;top:790px">Bildtyp:</div><div class="t" style="left:851px;top:790px;font-size:12px;font-family:'Liberation Serif',serif">I</div>
<div class="t" style="left:18px;top:828px">Ausgabe:</div>
<div class="combo" style="left:103px;top:827px;width:150px;height:21px;line-height:20px;padding-left:3px">In Ordner speichern<svg class="a" style="right:3px;top:6px" width="10" height="8" viewBox="0 0 10 8"><path d="M0.9 1 L5 5.6 L9.1 1" fill="none" stroke="#3c3c3c" stroke-width="1.6"/></svg></div>
<div class="t" style="left:18px;top:853px">Zielordner:</div>
<div class="edit" style="left:103px;top:853px;width:957px;height:19px;line-height:17px;padding-left:5px">D:\Data\Mülleimer\</div>
<div class="btn" style="left:1071px;top:853px;width:98px;height:18px;line-height:16px">Durchsuchen...</div>
<div class="btn" style="left:1071px;top:878px;width:98px;height:18px;line-height:16px">Öffnen...</div>
<div class="a" style="left:103px;top:880px;width:13px;height:13px;border-radius:50%;background:#fff;border:1px solid #5a5a5a"></div>
<div class="t" style="left:118px;top:881px">Überschreiben</div>
<div class="a" style="left:223px;top:880px;width:13px;height:13px;border-radius:50%;background:#fff;border:1px solid #5a5a5a"></div>
<div class="a" style="left:226px;top:883px;width:7px;height:7px;border-radius:50%;background:#1a1a1a"></div>
<div class="t" style="left:238px;top:881px">Nicht überschreiben (automatisch in &lt;Dateiname + index&gt;)</div>
</body>
</html>
